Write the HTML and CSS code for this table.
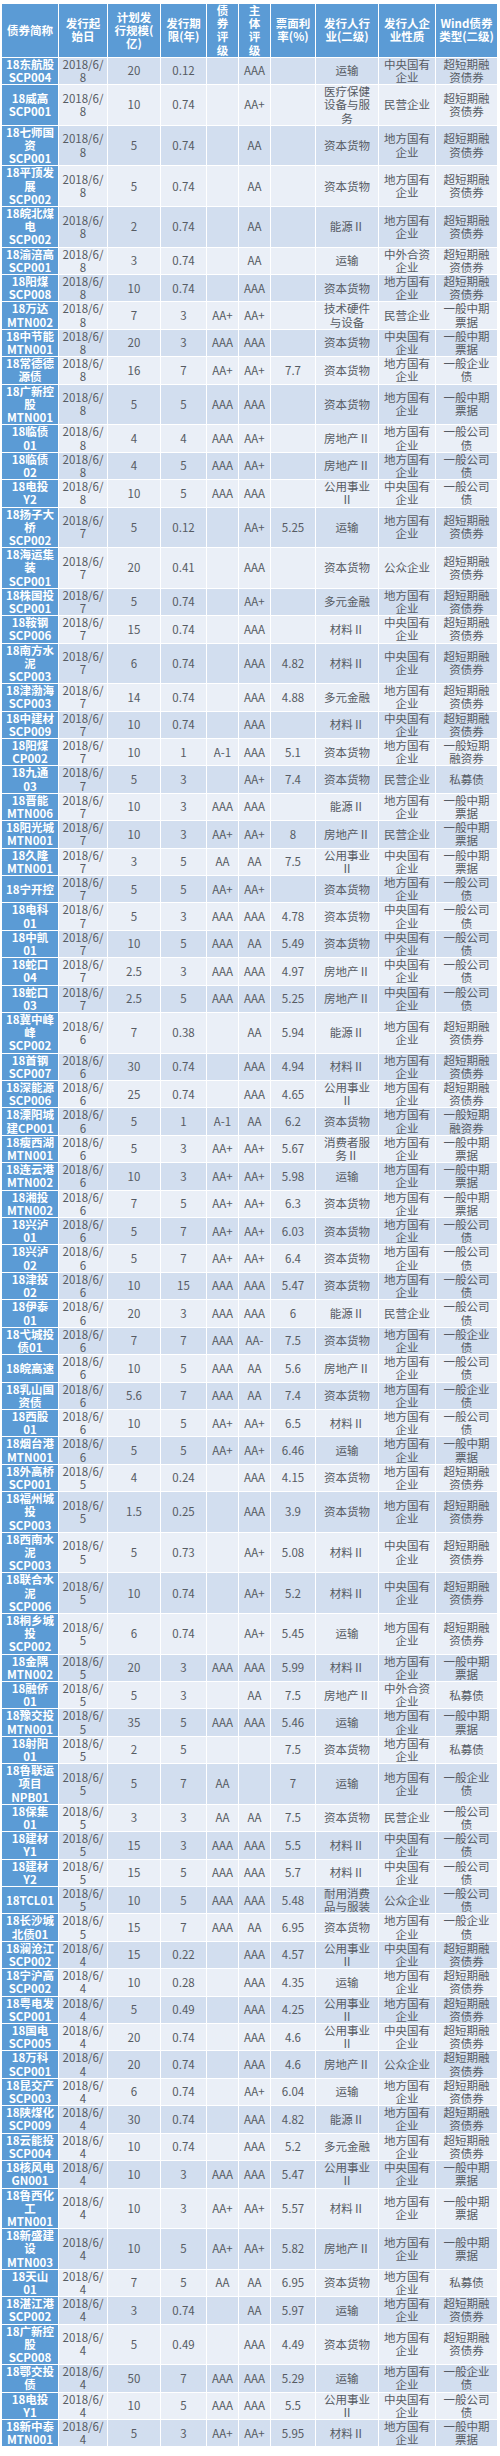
FILE: index.html
```html
<!DOCTYPE html>
<html lang="zh-CN">
<head>
<meta charset="utf-8">
<title>债券发行一览</title>
<link rel="stylesheet" href="styles.css">
</head>
<body>
<div class="wrap">
<table class="bonds">
<colgroup>
<col class="c1"><col class="c2"><col class="c3"><col class="c4"><col class="c5"><col class="c6"><col class="c7"><col class="c8"><col class="c9"><col class="c10">
</colgroup>
<thead>
<tr><th>债券简称</th><th>发行起<br>始日</th><th>计划发<br>行规模(<br>亿)</th><th>发行期<br>限(年)</th><th>债<br>券<br>评<br>级</th><th>主<br>体<br>评<br>级</th><th>票面利<br>率(%)</th><th>发行人行<br>业(二级)</th><th>发行人企<br>业性质</th><th>Wind债券<br>类型(二级)</th></tr>
</thead>
<tbody>
<tr><td class="n">18东航股<br>SCP004</td><td>2018/6/<br>8</td><td>20</td><td>0.12</td><td></td><td>AAA</td><td></td><td>运输</td><td>中央国有<br>企业</td><td>超短期融<br>资债券</td></tr>
<tr><td class="n">18威高<br>SCP001</td><td>2018/6/<br>8</td><td>10</td><td>0.74</td><td></td><td>AA+</td><td></td><td>医疗保健<br>设备与服<br>务</td><td>民营企业</td><td>超短期融<br>资债券</td></tr>
<tr><td class="n">18七师国<br>资<br>SCP001</td><td>2018/6/<br>8</td><td>5</td><td>0.74</td><td></td><td>AA</td><td></td><td>资本货物</td><td>地方国有<br>企业</td><td>超短期融<br>资债券</td></tr>
<tr><td class="n">18平顶发<br>展<br>SCP002</td><td>2018/6/<br>8</td><td>5</td><td>0.74</td><td></td><td>AA</td><td></td><td>资本货物</td><td>地方国有<br>企业</td><td>超短期融<br>资债券</td></tr>
<tr><td class="n">18皖北煤<br>电<br>SCP002</td><td>2018/6/<br>8</td><td>2</td><td>0.74</td><td></td><td>AA</td><td></td><td>能源Ⅱ</td><td>地方国有<br>企业</td><td>超短期融<br>资债券</td></tr>
<tr><td class="n">18渝涪高<br>SCP001</td><td>2018/6/<br>8</td><td>3</td><td>0.74</td><td></td><td>AA</td><td></td><td>运输</td><td>中外合资<br>企业</td><td>超短期融<br>资债券</td></tr>
<tr><td class="n">18阳煤<br>SCP008</td><td>2018/6/<br>8</td><td>10</td><td>0.74</td><td></td><td>AAA</td><td></td><td>资本货物</td><td>地方国有<br>企业</td><td>超短期融<br>资债券</td></tr>
<tr><td class="n">18万达<br>MTN002</td><td>2018/6/<br>8</td><td>7</td><td>3</td><td>AA+</td><td>AA+</td><td></td><td>技术硬件<br>与设备</td><td>民营企业</td><td>一般中期<br>票据</td></tr>
<tr><td class="n">18中节能<br>MTN001</td><td>2018/6/<br>8</td><td>20</td><td>3</td><td>AAA</td><td>AAA</td><td></td><td>资本货物</td><td>中央国有<br>企业</td><td>一般中期<br>票据</td></tr>
<tr><td class="n">18常德德<br>源债</td><td>2018/6/<br>8</td><td>16</td><td>7</td><td>AA+</td><td>AA+</td><td>7.7</td><td>资本货物</td><td>地方国有<br>企业</td><td>一般企业<br>债</td></tr>
<tr><td class="n">18广新控<br>股<br>MTN001</td><td>2018/6/<br>8</td><td>5</td><td>5</td><td>AAA</td><td>AAA</td><td></td><td>资本货物</td><td>地方国有<br>企业</td><td>一般中期<br>票据</td></tr>
<tr><td class="n">18临债<br>01</td><td>2018/6/<br>8</td><td>4</td><td>4</td><td>AAA</td><td>AA+</td><td></td><td>房地产Ⅱ</td><td>地方国有<br>企业</td><td>一般公司<br>债</td></tr>
<tr><td class="n">18临债<br>02</td><td>2018/6/<br>8</td><td>4</td><td>5</td><td>AAA</td><td>AA+</td><td></td><td>房地产Ⅱ</td><td>地方国有<br>企业</td><td>一般公司<br>债</td></tr>
<tr><td class="n">18电投<br>Y2</td><td>2018/6/<br>8</td><td>10</td><td>5</td><td>AAA</td><td>AAA</td><td></td><td>公用事业<br>Ⅱ</td><td>中央国有<br>企业</td><td>一般公司<br>债</td></tr>
<tr><td class="n">18扬子大<br>桥<br>SCP002</td><td>2018/6/<br>7</td><td>5</td><td>0.12</td><td></td><td>AA+</td><td>5.25</td><td>运输</td><td>地方国有<br>企业</td><td>超短期融<br>资债券</td></tr>
<tr><td class="n">18海运集<br>装<br>SCP001</td><td>2018/6/<br>7</td><td>20</td><td>0.41</td><td></td><td>AAA</td><td></td><td>资本货物</td><td>公众企业</td><td>超短期融<br>资债券</td></tr>
<tr><td class="n">18株国投<br>SCP001</td><td>2018/6/<br>7</td><td>5</td><td>0.74</td><td></td><td>AA+</td><td></td><td>多元金融</td><td>地方国有<br>企业</td><td>超短期融<br>资债券</td></tr>
<tr><td class="n">18鞍钢<br>SCP006</td><td>2018/6/<br>7</td><td>15</td><td>0.74</td><td></td><td>AAA</td><td></td><td>材料Ⅱ</td><td>中央国有<br>企业</td><td>超短期融<br>资债券</td></tr>
<tr><td class="n">18南方水<br>泥<br>SCP003</td><td>2018/6/<br>7</td><td>6</td><td>0.74</td><td></td><td>AAA</td><td>4.82</td><td>材料Ⅱ</td><td>中央国有<br>企业</td><td>超短期融<br>资债券</td></tr>
<tr><td class="n">18津渤海<br>SCP003</td><td>2018/6/<br>7</td><td>14</td><td>0.74</td><td></td><td>AAA</td><td>4.88</td><td>多元金融</td><td>地方国有<br>企业</td><td>超短期融<br>资债券</td></tr>
<tr><td class="n">18中建材<br>SCP009</td><td>2018/6/<br>7</td><td>10</td><td>0.74</td><td></td><td>AAA</td><td></td><td>材料Ⅱ</td><td>中央国有<br>企业</td><td>超短期融<br>资债券</td></tr>
<tr><td class="n">18阳煤<br>CP002</td><td>2018/6/<br>7</td><td>10</td><td>1</td><td>A-1</td><td>AAA</td><td>5.1</td><td>资本货物</td><td>地方国有<br>企业</td><td>一般短期<br>融资券</td></tr>
<tr><td class="n">18九通<br>03</td><td>2018/6/<br>7</td><td>5</td><td>3</td><td></td><td>AA+</td><td>7.4</td><td>资本货物</td><td>民营企业</td><td>私募债</td></tr>
<tr><td class="n">18晋能<br>MTN006</td><td>2018/6/<br>7</td><td>10</td><td>3</td><td>AAA</td><td>AAA</td><td></td><td>能源Ⅱ</td><td>地方国有<br>企业</td><td>一般中期<br>票据</td></tr>
<tr><td class="n">18阳光城<br>MTN001</td><td>2018/6/<br>7</td><td>10</td><td>3</td><td>AA+</td><td>AA+</td><td>8</td><td>房地产Ⅱ</td><td>民营企业</td><td>一般中期<br>票据</td></tr>
<tr><td class="n">18久隆<br>MTN001</td><td>2018/6/<br>7</td><td>3</td><td>5</td><td>AA</td><td>AA</td><td>7.5</td><td>公用事业<br>Ⅱ</td><td>中央国有<br>企业</td><td>一般中期<br>票据</td></tr>
<tr><td class="n">18宁开控</td><td>2018/6/<br>7</td><td>5</td><td>5</td><td>AA+</td><td>AA+</td><td></td><td>资本货物</td><td>地方国有<br>企业</td><td>一般公司<br>债</td></tr>
<tr><td class="n">18电科<br>01</td><td>2018/6/<br>7</td><td>5</td><td>3</td><td>AAA</td><td>AAA</td><td>4.78</td><td>资本货物</td><td>中央国有<br>企业</td><td>一般公司<br>债</td></tr>
<tr><td class="n">18中凯<br>01</td><td>2018/6/<br>7</td><td>10</td><td>5</td><td>AAA</td><td>AA</td><td>5.49</td><td>资本货物</td><td>中央国有<br>企业</td><td>一般公司<br>债</td></tr>
<tr><td class="n">18蛇口<br>04</td><td>2018/6/<br>7</td><td>2.5</td><td>3</td><td>AAA</td><td>AAA</td><td>4.97</td><td>房地产Ⅱ</td><td>中央国有<br>企业</td><td>一般公司<br>债</td></tr>
<tr><td class="n">18蛇口<br>03</td><td>2018/6/<br>7</td><td>2.5</td><td>5</td><td>AAA</td><td>AAA</td><td>5.25</td><td>房地产Ⅱ</td><td>中央国有<br>企业</td><td>一般公司<br>债</td></tr>
<tr><td class="n">18冀中峰<br>峰<br>SCP002</td><td>2018/6/<br>6</td><td>7</td><td>0.38</td><td></td><td>AA</td><td>5.94</td><td>能源Ⅱ</td><td>地方国有<br>企业</td><td>超短期融<br>资债券</td></tr>
<tr><td class="n">18首钢<br>SCP007</td><td>2018/6/<br>6</td><td>30</td><td>0.74</td><td></td><td>AAA</td><td>4.94</td><td>材料Ⅱ</td><td>地方国有<br>企业</td><td>超短期融<br>资债券</td></tr>
<tr><td class="n">18深能源<br>SCP006</td><td>2018/6/<br>6</td><td>25</td><td>0.74</td><td></td><td>AAA</td><td>4.65</td><td>公用事业<br>Ⅱ</td><td>地方国有<br>企业</td><td>超短期融<br>资债券</td></tr>
<tr><td class="n">18溧阳城<br>建CP001</td><td>2018/6/<br>6</td><td>5</td><td>1</td><td>A-1</td><td>AA</td><td>6.2</td><td>资本货物</td><td>地方国有<br>企业</td><td>一般短期<br>融资券</td></tr>
<tr><td class="n">18瘦西湖<br>MTN001</td><td>2018/6/<br>6</td><td>5</td><td>3</td><td>AA+</td><td>AA+</td><td>5.67</td><td>消费者服<br>务Ⅱ</td><td>地方国有<br>企业</td><td>一般中期<br>票据</td></tr>
<tr><td class="n">18连云港<br>MTN002</td><td>2018/6/<br>6</td><td>10</td><td>3</td><td>AA+</td><td>AA+</td><td>5.98</td><td>运输</td><td>地方国有<br>企业</td><td>一般中期<br>票据</td></tr>
<tr><td class="n">18湘投<br>MTN002</td><td>2018/6/<br>6</td><td>7</td><td>5</td><td>AA+</td><td>AA+</td><td>6.3</td><td>资本货物</td><td>地方国有<br>企业</td><td>一般中期<br>票据</td></tr>
<tr><td class="n">18兴泸<br>01</td><td>2018/6/<br>6</td><td>5</td><td>7</td><td>AA+</td><td>AA+</td><td>6.03</td><td>资本货物</td><td>地方国有<br>企业</td><td>一般公司<br>债</td></tr>
<tr><td class="n">18兴泸<br>02</td><td>2018/6/<br>6</td><td>5</td><td>7</td><td>AA+</td><td>AA+</td><td>6.4</td><td>资本货物</td><td>地方国有<br>企业</td><td>一般公司<br>债</td></tr>
<tr><td class="n">18津投<br>02</td><td>2018/6/<br>6</td><td>10</td><td>15</td><td>AAA</td><td>AAA</td><td>5.47</td><td>资本货物</td><td>地方国有<br>企业</td><td>一般公司<br>债</td></tr>
<tr><td class="n">18伊泰<br>01</td><td>2018/6/<br>6</td><td>20</td><td>3</td><td>AAA</td><td>AAA</td><td>6</td><td>能源Ⅱ</td><td>民营企业</td><td>一般公司<br>债</td></tr>
<tr><td class="n">18弋城投<br>债01</td><td>2018/6/<br>6</td><td>7</td><td>7</td><td>AAA</td><td>AA-</td><td>7.5</td><td>资本货物</td><td>地方国有<br>企业</td><td>一般企业<br>债</td></tr>
<tr><td class="n">18皖高速</td><td>2018/6/<br>6</td><td>10</td><td>5</td><td>AAA</td><td>AA</td><td>5.6</td><td>房地产Ⅱ</td><td>地方国有<br>企业</td><td>一般公司<br>债</td></tr>
<tr><td class="n">18乳山国<br>资债</td><td>2018/6/<br>6</td><td>5.6</td><td>7</td><td>AAA</td><td>AA</td><td>7.4</td><td>资本货物</td><td>地方国有<br>企业</td><td>一般企业<br>债</td></tr>
<tr><td class="n">18西股<br>01</td><td>2018/6/<br>6</td><td>10</td><td>5</td><td>AA+</td><td>AA+</td><td>6.5</td><td>材料Ⅱ</td><td>地方国有<br>企业</td><td>一般公司<br>债</td></tr>
<tr><td class="n">18烟台港<br>MTN001</td><td>2018/6/<br>6</td><td>5</td><td>5</td><td>AA+</td><td>AA+</td><td>6.46</td><td>运输</td><td>地方国有<br>企业</td><td>一般中期<br>票据</td></tr>
<tr><td class="n">18外高桥<br>SCP001</td><td>2018/6/<br>5</td><td>4</td><td>0.24</td><td></td><td>AAA</td><td>4.15</td><td>资本货物</td><td>地方国有<br>企业</td><td>超短期融<br>资债券</td></tr>
<tr><td class="n">18福州城<br>投<br>SCP003</td><td>2018/6/<br>5</td><td>1.5</td><td>0.25</td><td></td><td>AAA</td><td>3.9</td><td>资本货物</td><td>地方国有<br>企业</td><td>超短期融<br>资债券</td></tr>
<tr><td class="n">18西南水<br>泥<br>SCP003</td><td>2018/6/<br>5</td><td>5</td><td>0.73</td><td></td><td>AA+</td><td>5.08</td><td>材料Ⅱ</td><td>中央国有<br>企业</td><td>超短期融<br>资债券</td></tr>
<tr><td class="n">18联合水<br>泥<br>SCP006</td><td>2018/6/<br>5</td><td>10</td><td>0.74</td><td></td><td>AA+</td><td>5.2</td><td>材料Ⅱ</td><td>中央国有<br>企业</td><td>超短期融<br>资债券</td></tr>
<tr><td class="n">18桐乡城<br>投<br>SCP002</td><td>2018/6/<br>5</td><td>6</td><td>0.74</td><td></td><td>AA+</td><td>5.45</td><td>运输</td><td>地方国有<br>企业</td><td>超短期融<br>资债券</td></tr>
<tr><td class="n">18金隅<br>MTN002</td><td>2018/6/<br>5</td><td>20</td><td>3</td><td>AAA</td><td>AAA</td><td>5.99</td><td>材料Ⅱ</td><td>地方国有<br>企业</td><td>一般中期<br>票据</td></tr>
<tr><td class="n">18融侨<br>01</td><td>2018/6/<br>5</td><td>5</td><td>3</td><td></td><td>AA</td><td>7.5</td><td>房地产Ⅱ</td><td>中外合资<br>企业</td><td>私募债</td></tr>
<tr><td class="n">18豫交投<br>MTN001</td><td>2018/6/<br>5</td><td>35</td><td>5</td><td>AAA</td><td>AAA</td><td>5.46</td><td>运输</td><td>地方国有<br>企业</td><td>一般中期<br>票据</td></tr>
<tr><td class="n">18射阳<br>01</td><td>2018/6/<br>5</td><td>2</td><td>5</td><td></td><td></td><td>7.5</td><td>资本货物</td><td>地方国有<br>企业</td><td>私募债</td></tr>
<tr><td class="n">18鲁联运<br>项目<br>NPB01</td><td>2018/6/<br>5</td><td>5</td><td>7</td><td>AA</td><td></td><td>7</td><td>运输</td><td>地方国有<br>企业</td><td>一般企业<br>债</td></tr>
<tr><td class="n">18保集<br>01</td><td>2018/6/<br>5</td><td>3</td><td>3</td><td>AA</td><td>AA</td><td>7.5</td><td>资本货物</td><td>民营企业</td><td>一般公司<br>债</td></tr>
<tr><td class="n">18建材<br>Y1</td><td>2018/6/<br>5</td><td>15</td><td>3</td><td>AAA</td><td>AAA</td><td>5.5</td><td>材料Ⅱ</td><td>中央国有<br>企业</td><td>一般公司<br>债</td></tr>
<tr><td class="n">18建材<br>Y2</td><td>2018/6/<br>5</td><td>15</td><td>5</td><td>AAA</td><td>AAA</td><td>5.7</td><td>材料Ⅱ</td><td>中央国有<br>企业</td><td>一般公司<br>债</td></tr>
<tr><td class="n">18TCL01</td><td>2018/6/<br>5</td><td>10</td><td>5</td><td>AAA</td><td>AAA</td><td>5.48</td><td>耐用消费<br>品与服装</td><td>公众企业</td><td>一般公司<br>债</td></tr>
<tr><td class="n">18长沙城<br>北债01</td><td>2018/6/<br>5</td><td>15</td><td>7</td><td>AAA</td><td>AA</td><td>6.95</td><td>资本货物</td><td>地方国有<br>企业</td><td>一般企业<br>债</td></tr>
<tr><td class="n">18澜沧江<br>SCP002</td><td>2018/6/<br>4</td><td>15</td><td>0.22</td><td></td><td>AAA</td><td>4.57</td><td>公用事业<br>Ⅱ</td><td>中央国有<br>企业</td><td>超短期融<br>资债券</td></tr>
<tr><td class="n">18宁沪高<br>SCP002</td><td>2018/6/<br>4</td><td>10</td><td>0.28</td><td></td><td>AAA</td><td>4.35</td><td>运输</td><td>地方国有<br>企业</td><td>超短期融<br>资债券</td></tr>
<tr><td class="n">18粤电发<br>SCP001</td><td>2018/6/<br>4</td><td>5</td><td>0.49</td><td></td><td>AAA</td><td>4.25</td><td>公用事业<br>Ⅱ</td><td>地方国有<br>企业</td><td>超短期融<br>资债券</td></tr>
<tr><td class="n">18国电<br>SCP005</td><td>2018/6/<br>4</td><td>20</td><td>0.74</td><td></td><td>AAA</td><td>4.6</td><td>公用事业<br>Ⅱ</td><td>中央国有<br>企业</td><td>超短期融<br>资债券</td></tr>
<tr><td class="n">18万科<br>SCP001</td><td>2018/6/<br>4</td><td>20</td><td>0.74</td><td></td><td>AAA</td><td>4.6</td><td>房地产Ⅱ</td><td>公众企业</td><td>超短期融<br>资债券</td></tr>
<tr><td class="n">18昆交产<br>SCP003</td><td>2018/6/<br>4</td><td>6</td><td>0.74</td><td></td><td>AA+</td><td>6.04</td><td>运输</td><td>地方国有<br>企业</td><td>超短期融<br>资债券</td></tr>
<tr><td class="n">18陕煤化<br>SCP009</td><td>2018/6/<br>4</td><td>30</td><td>0.74</td><td></td><td>AAA</td><td>4.82</td><td>能源Ⅱ</td><td>地方国有<br>企业</td><td>超短期融<br>资债券</td></tr>
<tr><td class="n">18云能投<br>SCP004</td><td>2018/6/<br>4</td><td>10</td><td>0.74</td><td></td><td>AAA</td><td>5.2</td><td>多元金融</td><td>地方国有<br>企业</td><td>超短期融<br>资债券</td></tr>
<tr><td class="n">18核风电<br>GN001</td><td>2018/6/<br>4</td><td>10</td><td>3</td><td>AAA</td><td>AAA</td><td>5.47</td><td>公用事业<br>Ⅱ</td><td>中央国有<br>企业</td><td>一般中期<br>票据</td></tr>
<tr><td class="n">18鲁西化<br>工<br>MTN001</td><td>2018/6/<br>4</td><td>10</td><td>3</td><td>AA+</td><td>AA+</td><td>5.57</td><td>材料Ⅱ</td><td>地方国有<br>企业</td><td>一般中期<br>票据</td></tr>
<tr><td class="n">18新盛建<br>设<br>MTN003</td><td>2018/6/<br>4</td><td>10</td><td>5</td><td>AA+</td><td>AA+</td><td>5.82</td><td>房地产Ⅱ</td><td>地方国有<br>企业</td><td>一般中期<br>票据</td></tr>
<tr><td class="n">18天山<br>01</td><td>2018/6/<br>4</td><td>7</td><td>5</td><td>AA</td><td>AA</td><td>6.95</td><td>资本货物</td><td>地方国有<br>企业</td><td>私募债</td></tr>
<tr><td class="n">18湛江港<br>SCP002</td><td>2018/6/<br>4</td><td>3</td><td>0.74</td><td></td><td>AA</td><td>5.97</td><td>运输</td><td>地方国有<br>企业</td><td>超短期融<br>资债券</td></tr>
<tr><td class="n">18广新控<br>股<br>SCP008</td><td>2018/6/<br>4</td><td>5</td><td>0.49</td><td></td><td>AAA</td><td>4.49</td><td>资本货物</td><td>地方国有<br>企业</td><td>超短期融<br>资债券</td></tr>
<tr><td class="n">18鄂交投<br>债</td><td>2018/6/<br>4</td><td>50</td><td>7</td><td>AAA</td><td>AAA</td><td>5.29</td><td>运输</td><td>地方国有<br>企业</td><td>一般企业<br>债</td></tr>
<tr><td class="n">18电投<br>Y1</td><td>2018/6/<br>4</td><td>10</td><td>5</td><td>AAA</td><td>AAA</td><td>5.5</td><td>公用事业<br>Ⅱ</td><td>中央国有<br>企业</td><td>一般公司<br>债</td></tr>
<tr><td class="n">18新中泰<br>MTN001</td><td>2018/6/<br>4</td><td>5</td><td>3</td><td>AA+</td><td>AA+</td><td>5.95</td><td>材料Ⅱ</td><td>地方国有<br>企业</td><td>一般中期<br>票据</td></tr>
</tbody>
</table>
</div>
</body>
</html>
```

FILE: styles.css
```css
html, body {
  margin: 0;
  padding: 0;
  background: #ffffff;
}

body {
  font-family: "Noto Sans CJK SC", "Liberation Sans", sans-serif;
}

.wrap {
  padding: 3px 3px 0 1px;
}

.bonds {
  width: 496px;
  border-collapse: collapse;
  table-layout: fixed;
  font-size: 11.5px;
  line-height: 13.2px;
  color: #565b63;
}

.bonds th,
.bonds td {
  border: 1px solid #ffffff;
  padding: 0;
  text-align: center;
  vertical-align: middle;
  white-space: nowrap;
  overflow: hidden;
}

.bonds th {
  background: #5b9bd5;
  color: #ffffff;
  font-weight: bold;
}

.bonds tbody tr:nth-child(odd) td {
  background: #d2deef;
}

.bonds tbody tr:nth-child(even) td {
  background: #eaeff7;
}

.bonds tbody tr td.n {
  background: #5b9bd5;
  color: #ffffff;
  font-weight: bold;
}

.c1 { width: 57px; }
.c2 { width: 49px; }
.c3 { width: 53px; }
.c4 { width: 46px; }
.c5 { width: 32px; }
.c6 { width: 32px; }
.c7 { width: 45px; }
.c8 { width: 63px; }
.c9 { width: 57px; }
.c10 { width: 62px; }
```
